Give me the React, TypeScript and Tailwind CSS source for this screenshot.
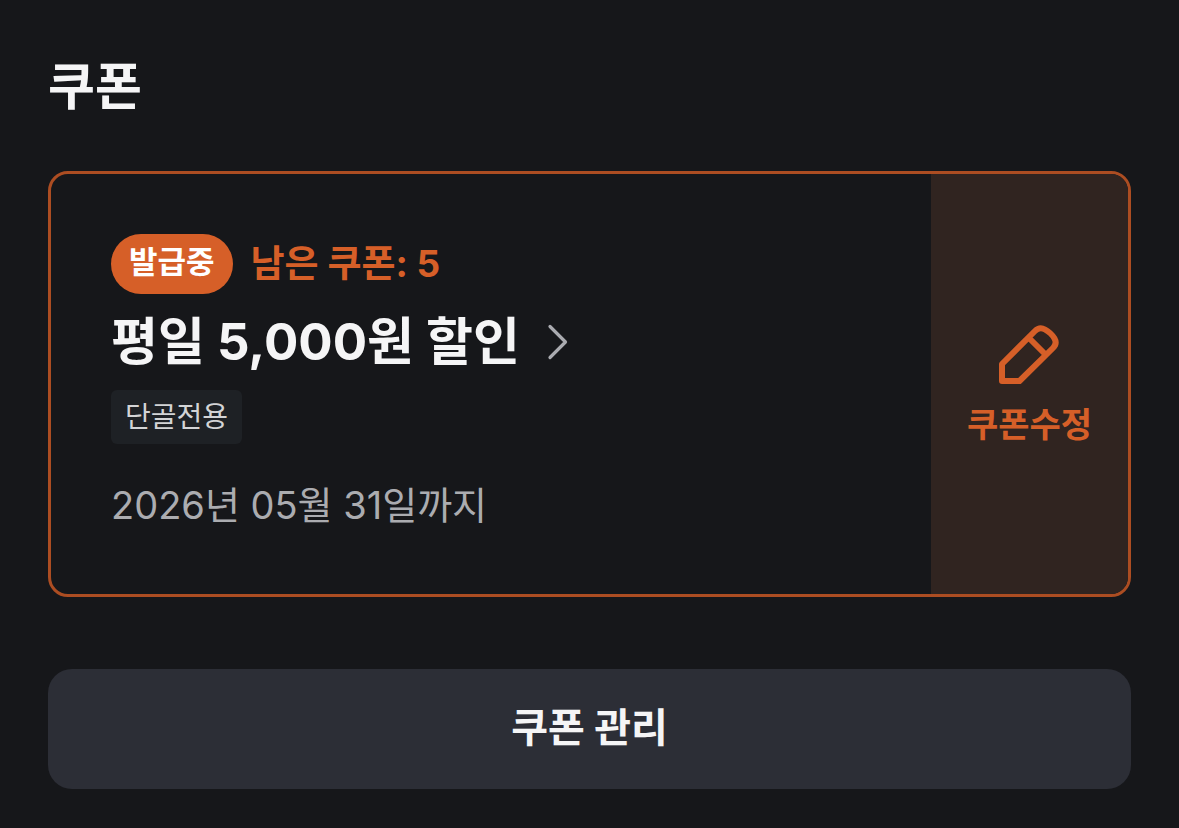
const coupon = {
    status: "발급중",
    remaining: 5,
    title: "평일 5,000원 할인",
    tag: "단골전용",
    expires: "2026년 05월 31일까지",
};

function ChevronIcon() {
    return (
        <svg width="24" height="40" viewBox="0 0 24 40" fill="none" aria-hidden="true">
            <path d="M4 4.5L19.5 20L4 35.5" stroke="#aaabb0" strokeWidth="3.2" strokeLinecap="round" strokeLinejoin="round" />
        </svg>
    );
}

function PencilIcon() {
    return (
        <svg width="64" height="64" viewBox="0 0 64 64" fill="none" aria-hidden="true">
            <path
                d="M4 59V42L37 9C40 6 43.5 5.500 47 7.500C51.5 10 54.5 13 56.5 16.5C58.5 20 58 23 55 26L21.5 59Z M30.5 15.5L47.5 32.5"
                stroke="#d65f28"
                strokeWidth="6"
                strokeLinejoin="round"
            />
        </svg>
    );
}

function CouponCard() {
    return (
        <article className="flex overflow-hidden rounded-[20px] border-3 border-[#ac4d22]">
            <div className="flex flex-1 flex-col items-start px-[60px] pt-[60px] pb-16">
                <div className="flex items-center gap-[18px]">
                    <span className="rounded-full bg-[#d65f28] px-[18px] pt-1 pb-2 text-[31px] leading-[48px] font-bold text-white">
                        {coupon.status}
                    </span>
                    <span className="text-[37px] leading-[60px] font-bold text-[#d65f28]">남은 쿠폰: {coupon.remaining}</span>
                </div>

                <a href="#coupon" className="mt-3 flex items-center gap-[26px] text-[51px] leading-[72px] font-bold text-[#f5f5f6]">
                    {coupon.title}
                    <ChevronIcon />
                </a>

                <span className="mt-3 rounded-md bg-[#1e2125] px-[14px] text-[28px] leading-[54px] text-[#d3d4d6]">
                    {coupon.tag}
                </span>
                <p className="mt-9 text-[38px] leading-[50px] text-[#abacb0]">{coupon.expires}</p>
            </div>

            <button type="button" className="flex w-[197px] flex-col items-center justify-center gap-[14px] bg-[#302420] pt-1 text-[34px] leading-[50px] font-bold text-[#d65f28]">
                <PencilIcon />
                쿠폰수정
            </button>
        </article>
    );
}

export default function App() {
    return (
        <main className="min-h-screen bg-[#16171a] px-12 pt-[51px] pb-10 font-['Inter','Noto_Sans_CJK_KR',sans-serif]">
            <h1 className="mb-12 text-[51px] leading-[72px] font-bold text-[#f5f5f6]">쿠폰</h1>
            <CouponCard />
            <button type="button" className="mt-[72px] h-[120px] w-full rounded-3xl bg-[#2c2e36] pb-[2px] text-[40px] font-bold text-[#f5f5f6]">
                쿠폰 관리
            </button>
        </main>
    );
}
